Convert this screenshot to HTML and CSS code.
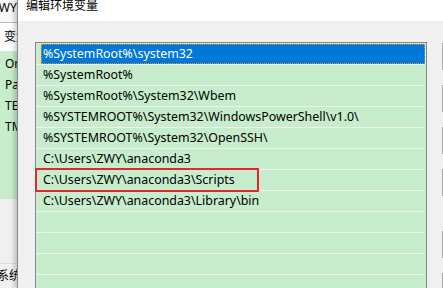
FILE: index.html
```html
<!DOCTYPE html>
<html lang="zh-CN">
<head>
  <meta charset="UTF-8" />
  <title>编辑环境变量</title>
<link rel="stylesheet" href="styles.css">
</head>
<body>

<!-- Environment variables window (behind) -->
<div class="env-window">
  <div class="env-title">ZWY 的用户变量(U)</div>
  <div class="env-head">变量</div>
  <div class="env-list">
    <div class="env-row">OneDrive</div>
    <div class="env-row">Path</div>
    <div class="env-row">TEMP</div>
    <div class="env-row">TMP</div>
  </div>
  <div class="env-rest"></div>
  <div class="env-group">系统变量(S)</div>
</div>

<!-- Edit dialog -->
<div class="dialog">
  <div class="dialog-title">编辑环境变量</div>
  <div class="dialog-body">
    <div class="path-list">
      <div class="path-row selected"><span>%SystemRoot%\system32</span></div>
      <div class="path-row"><span>%SystemRoot%</span></div>
      <div class="path-row"><span>%SystemRoot%\System32\Wbem</span></div>
      <div class="path-row"><span>%SYSTEMROOT%\System32\WindowsPowerShell\v1.0\</span></div>
      <div class="path-row"><span>%SYSTEMROOT%\System32\OpenSSH\</span></div>
      <div class="path-row"><span>C:\Users\ZWY\anaconda3</span></div>
      <div class="path-row marked"><span>C:\Users\ZWY\anaconda3\Scripts</span></div>
      <div class="path-row"><span>C:\Users\ZWY\anaconda3\Library\bin</span></div>
      <div class="path-row"></div>
      <div class="path-row"></div>
      <div class="path-row"></div>
      <div class="path-row"></div>
    </div>
    <div class="buttons">
      <div class="btn">新建(N)</div>
      <div class="btn">编辑(E)</div>
      <div class="btn">浏览(B)...</div>
      <div class="btn">删除(D)</div>
      <div class="btn gap">上移(U)</div>
      <div class="btn">下移(O)</div>
    </div>
  </div>
</div>

</body>
</html>
```

FILE: styles.css
```css
body {
  margin: 0;
  width: 443px;
  height: 288px;
  overflow: hidden;
  display: flex;
  font-family: "Noto Sans", "Noto Sans CJK SC", sans-serif;
  font-size: 12px;
  color: #000;
  background: #f0f0f0;
}

/* window behind the dialog */
.env-window {
  width: 17px;
  flex-shrink: 0;
  display: flex;
  flex-direction: column;
  overflow: hidden;
  white-space: nowrap;
  background: #f0f0f0;
}

.env-title {
  height: 22px;
  line-height: 16px;
  text-indent: -8px;
  border-bottom: 1px solid #b9b9b9;
  background: #f7f7f7;
}

.env-head {
  height: 28px;
  line-height: 28px;
  padding-left: 4px;
  background: #fff;
}

.env-list {
  background: #c7edcc;
  padding-top: 2px;
  height: 146px;
}

.env-row {
  height: 21px;
  line-height: 21px;
  padding-left: 5px;
}

.env-rest {
  flex: 1;
  border-bottom: 1px solid #dcdcdc;
}

.env-group {
  height: 24px;
  line-height: 24px;
  text-indent: -3px;
}

/* edit dialog */
.dialog {
  flex: 1;
  min-width: 0;
  display: flex;
  flex-direction: column;
  background: #f0f0f0;
  border-left: 1px solid #8a8a8a;
  box-shadow: -3px 0 4px rgba(0,0,0,0.18);
  overflow: hidden;
}

.dialog-title {
  flex-shrink: 0;
  height: 21px;
  line-height: 11px;
  background: #fff;
  padding-left: 8px;
  font-size: 12px;
  color: #000;
}

.dialog-body {
  flex-shrink: 0;
  display: flex;
  padding: 21px 0 0 17px;
  gap: 15px;
}

.path-list {
  width: 390px;
  flex-shrink: 0;
  height: 260px;
  border: 1px solid #828790;
  background: #c7edcc;
  padding-top: 1px;
  font-size: 12.4px;
}

.path-row {
  height: 20px;
  line-height: 20px;
  border-bottom: 1px solid #eef1ee;
  margin-right: 1px;
  position: relative;
  white-space: nowrap;
}

.path-row span {
  display: block;
  margin-left: 5px;
  padding-left: 2px;
  height: 20px;
}

.path-row.selected span {
  background: #0078d7;
  color: #fff;
  box-sizing: border-box;
  border: 1px dotted #ff8728;
  padding-left: 1px;
  line-height: 18px;
}

/* red annotation box */
.path-row.marked::after {
  content: "";
  position: absolute;
  top: -2px;
  left: -1px;
  width: 220px;
  height: 20px;
  border: 2px solid #e5282c;
}

.buttons {
  display: flex;
  flex-direction: column;
  gap: 15px;
  padding-top: 1px;
  flex-shrink: 0;
}

.btn {
  width: 80px;
  height: 27px;
  line-height: 27px;
  box-sizing: border-box;
  border: 1px solid #adadad;
  background: #e1e1e1;
  padding-left: 10px;
  white-space: nowrap;
}

.btn.gap {
  margin-top: 20px;
}
```
